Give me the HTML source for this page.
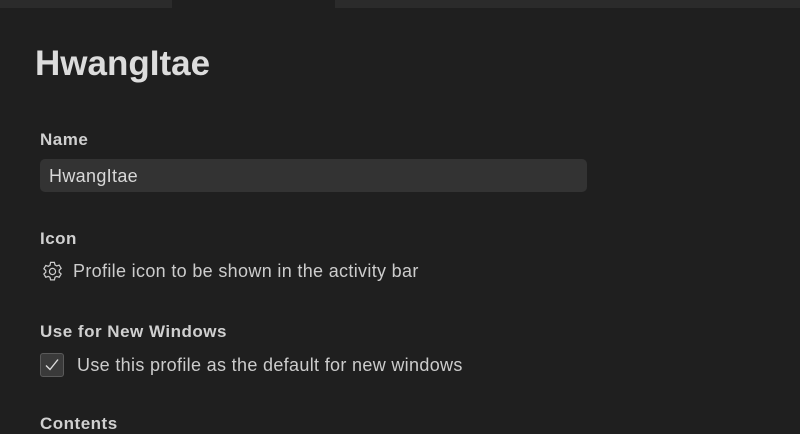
<!DOCTYPE html>
<html><head><style>
body{margin:0;width:800px;height:426px;background:#1f1f1f;overflow:hidden;font-family:"Liberation Sans",sans-serif;color:#ccc;position:relative}
.a{position:absolute;white-space:nowrap}
.lbl{font-weight:bold;font-size:17px;letter-spacing:0.5px;color:#d0d0d0}
.t{font-size:18px;letter-spacing:0.33px;color:#cccccc}
</style></head><body>
<div class="a" style="left:0;top:0;width:172px;height:8px;background:#2b2b2b"></div>
<div class="a" style="left:335px;top:0;width:465px;height:8px;background:#2b2b2b"></div>
<div class="a" style="left:35px;top:44px;font-size:35px;font-weight:bold;color:#dcdcdc">HwangItae</div>
<div class="a lbl" style="left:40px;top:130px">Name</div>
<div class="a" style="left:40px;top:159px;width:547px;height:33px;background:#333;border-radius:5px"></div>
<div class="a t" style="left:49px;top:166px;color:#d8d8d8">HwangItae</div>
<div class="a lbl" style="left:40px;top:229px">Icon</div>
<svg class="a" style="left:41px;top:260px" width="23" height="23" viewBox="0 0 24 24" fill="none" stroke="#ccc" stroke-width="1.3"><path d="M10 2.5h4l.6 2.7 1.8 1 2.6-.9 2 3.4-2 1.9v2.1l2 1.9-2 3.4-2.6-.9-1.8 1-.6 2.7h-4l-.6-2.7-1.8-1-2.6.9-2-3.4 2-1.9V11l-2-1.9 2-3.4 2.6.9 1.8-1z"/><circle cx="12" cy="12" r="3.2"/></svg>
<div class="a t" style="left:73px;top:261px">Profile icon to be shown in the activity bar</div>
<div class="a lbl" style="left:40px;top:322px">Use for New Windows</div>
<div class="a" style="left:40px;top:353px;width:24px;height:24px;background:#3a3a3a;border:1px solid #5a5a5a;border-radius:3px;box-sizing:border-box"></div>
<svg class="a" style="left:43px;top:356px" width="18" height="18" viewBox="0 0 18 18" fill="none" stroke="#ddd" stroke-width="1.4"><path d="M3 9.5l4 4 8-10"/></svg>
<div class="a t" style="left:77px;top:355px">Use this profile as the default for new windows</div>
<div class="a lbl" style="left:40px;top:414px">Contents</div>
</body></html>
